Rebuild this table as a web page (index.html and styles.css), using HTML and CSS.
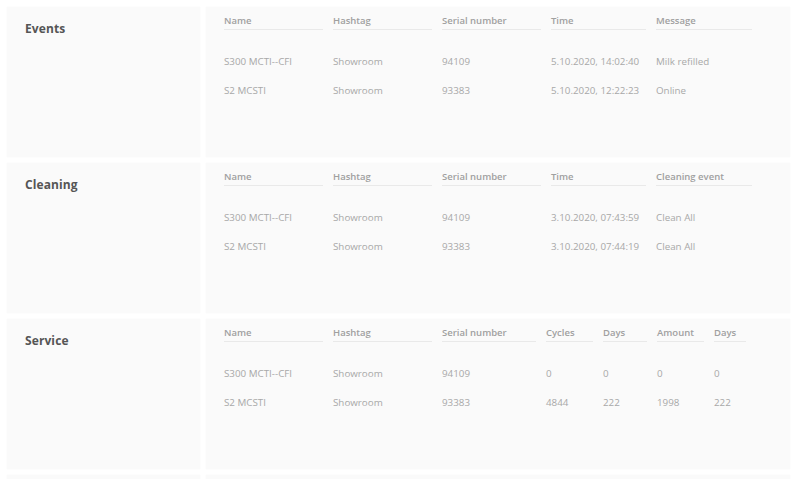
FILE: index.html
```html
<!DOCTYPE html>
<html>
<head>
<meta charset="utf-8">
<link rel="stylesheet" href="styles.css">
</head>
<body>
<div class="page">
  <section class="row">
    <div class="card side"><h2 class="title">Events</h2></div>
    <div class="card main">
      <div class="grid g-events">
        <div class="th">Name</div><div class="th">Hashtag</div><div class="th">Serial number</div><div class="th">Time</div><div class="th">Message</div>
        <div class="td first">S300 MCTI--CFI</div><div class="td first">Showroom</div><div class="td first">94109</div><div class="td first">5.10.2020, 14:02:40</div><div class="td first">Milk refilled</div>
        <div class="td">S2 MCSTI</div><div class="td">Showroom</div><div class="td">93383</div><div class="td">5.10.2020, 12:22:23</div><div class="td">Online</div>
      </div>
    </div>
  </section>
  <section class="row">
    <div class="card side"><h2 class="title">Cleaning</h2></div>
    <div class="card main">
      <div class="grid g-events">
        <div class="th">Name</div><div class="th">Hashtag</div><div class="th">Serial number</div><div class="th">Time</div><div class="th">Cleaning event</div>
        <div class="td first">S300 MCTI--CFI</div><div class="td first">Showroom</div><div class="td first">94109</div><div class="td first">3.10.2020, 07:43:59</div><div class="td first">Clean All</div>
        <div class="td">S2 MCSTI</div><div class="td">Showroom</div><div class="td">93383</div><div class="td">3.10.2020, 07:44:19</div><div class="td">Clean All</div>
      </div>
    </div>
  </section>
  <section class="row">
    <div class="card side"><h2 class="title">Service</h2></div>
    <div class="card main">
      <div class="grid g-service">
        <div class="th">Name</div><div class="th">Hashtag</div><div class="th">Serial number</div><div class="th">Cycles</div><div class="th">Days</div><div class="th">Amount</div><div class="th">Days</div>
        <div class="td first">S300 MCTI--CFI</div><div class="td first">Showroom</div><div class="td first">94109</div><div class="td first">0</div><div class="td first">0</div><div class="td first">0</div><div class="td first">0</div>
        <div class="td">S2 MCSTI</div><div class="td">Showroom</div><div class="td">93383</div><div class="td">4844</div><div class="td">222</div><div class="td">1998</div><div class="td">222</div>
      </div>
    </div>
  </section>
  <section class="row">
    <div class="card side"></div>
    <div class="card main"></div>
  </section>
</div>
</body>
</html>
```
FILE: styles.css
```css
html, body {
  margin: 0;
  padding: 0;
  background: #ffffff;
}
body {
  font-family: "Open Sans", "Noto Sans", sans-serif;
}
.page {
  box-sizing: border-box;
  height: 479px;
  overflow: hidden;
  padding: 7px 10px 0 7px;
  display: flex;
  flex-direction: column;
  gap: 6px;
}
.row {
  display: flex;
  gap: 6px;
  height: 150px;
  flex-shrink: 0;
}
.card {
  background: #fafafa;
  box-shadow: 0 0 2px rgba(0,0,0,0.035);
}
.side {
  width: 193px;
  flex-shrink: 0;
}
.main {
  flex: 1;
  padding: 7px 0 0 18px;
}
.title {
  margin: 13px 0 0 18px;
  font-size: 12px;
  font-weight: 700;
  color: #555555;
  letter-spacing: 0.1px;
}
.grid {
  display: grid;
  column-gap: 10px;
}
.g-events {
  grid-template-columns: 99px 99px 99px 95px 96px;
}
.g-service {
  grid-template-columns: 99px 99px 94px 47px 44px 47px 32px;
}
.th {
  font-size: 9.5px;
  font-weight: 600;
  color: #a0a0a0;
  line-height: 14px;
  padding-bottom: 1px;
  border-bottom: 1px solid #e9e9e9;
  white-space: nowrap;
}
.td {
  font-size: 9.8px;
  color: #a8a8a8;
  line-height: 14px;
  margin-top: 15px;
  white-space: nowrap;
}
.td.first {
  margin-top: 25px;
}
```
